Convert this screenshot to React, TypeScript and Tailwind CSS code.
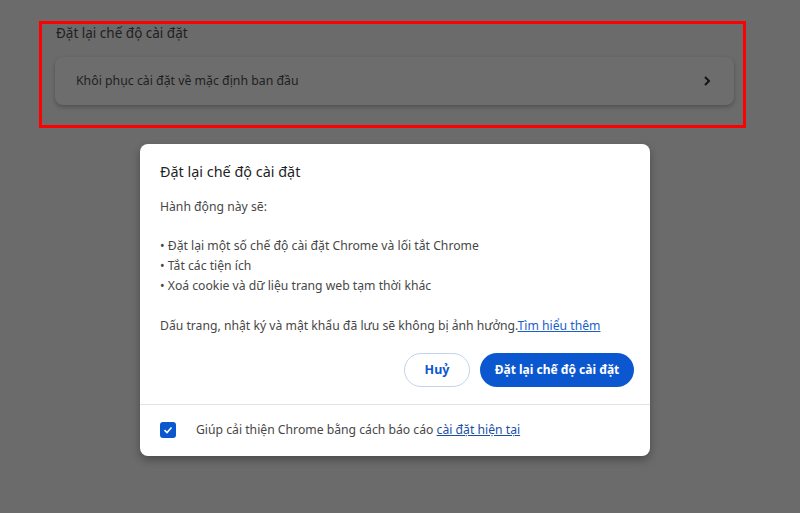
import React from "react";

export default function App() {
  return (
    <div
      className="w-[800px] h-[513px] bg-[#6b6b6b] overflow-hidden"
      style={{ fontFamily: '"Noto Sans", "Open Sans", sans-serif' }}
    >
      <div className="pt-[21px] pl-[39px]">
        <div className="w-[707px] h-[107px] border-[3px] border-[#ff0000] pl-[14px] pr-[9px]">
          <div className="mt-[-1px] text-[13.5px] leading-[20px] text-[#1f1f1f]">Đặt lại chế độ cài đặt</div>
          <div className="mt-[14px] ml-[-1px] h-[48px] rounded-[8px] bg-[#6d6d6d] shadow-[0_2px_4px_rgba(0,0,0,0.25)] flex items-center justify-between pl-[21px] pr-[22px]">
            <span className="text-[12.3px] text-[#1f1f1f]">Khôi phục cài đặt về mặc định ban đầu</span>
            <svg width="10" height="12" viewBox="0 0 10 12">
              <path d="M3 2 L7 6 L3 10" fill="none" stroke="#151515" strokeWidth="2" />
            </svg>
          </div>
        </div>
      </div>
      <div className="mt-[16px] ml-[140px] w-[510px] h-[312px] bg-white rounded-[8px] shadow-[0_4px_8px_rgba(0,0,0,0.3)] flex flex-col">
        <div className="pl-[20px] pr-[16px] pt-[17px]">
          <div className="text-[14.4px] leading-[22px] text-[#1f1f1f]">Đặt lại chế độ cài đặt</div>
          <div className="mt-[14px] text-[12.2px] leading-[20px] text-[#474747]">
            <div>Hành động này sẽ:</div>
            <div className="h-[19px]" />
            <div>• Đặt lại một số chế độ cài đặt Chrome và lối tắt Chrome</div>
            <div>• Tắt các tiện ích</div>
            <div>• Xoá cookie và dữ liệu trang web tạm thời khác</div>
            <div className="h-[20px]" />
            <div>
              Dấu trang, nhật ký và mật khẩu đã lưu sẽ không bị ảnh hưởng.
              <span className="text-[#1a5fc9] underline">Tìm hiểu thêm</span>
            </div>
          </div>
          <div className="mt-[17px] flex justify-end gap-[10px]">
            <button className="h-[34px] w-[66px] rounded-full border border-[#c4d3ec] text-[#0b57d0] text-[12.5px] font-bold bg-white">
              Huỷ
            </button>
            <button className="h-[34px] w-[154px] rounded-full bg-[#0b57d0] text-white text-[12px] font-bold">
              Đặt lại chế độ cài đặt
            </button>
          </div>
        </div>
        <div className="mt-[17px] h-px bg-[#e3e3e3]" />
        <div className="flex items-center pl-[20px] h-[52px]">
          <div className="w-[16px] h-[16px] rounded-[3px] bg-[#0b57d0] flex items-center justify-center">
            <svg width="12" height="12" viewBox="0 0 12 12">
              <path d="M2.5 6.2 L5 8.5 L9.5 3.5" fill="none" stroke="white" strokeWidth="1.6" />
            </svg>
          </div>
          <span className="ml-[20px] text-[12.2px] text-[#474747]">
            Giúp cải thiện Chrome bằng cách báo cáo{" "}
            <span className="text-[#1a4fa8] underline">cài đặt hiện tại</span>
          </span>
        </div>
      </div>
    </div>
  );
}
